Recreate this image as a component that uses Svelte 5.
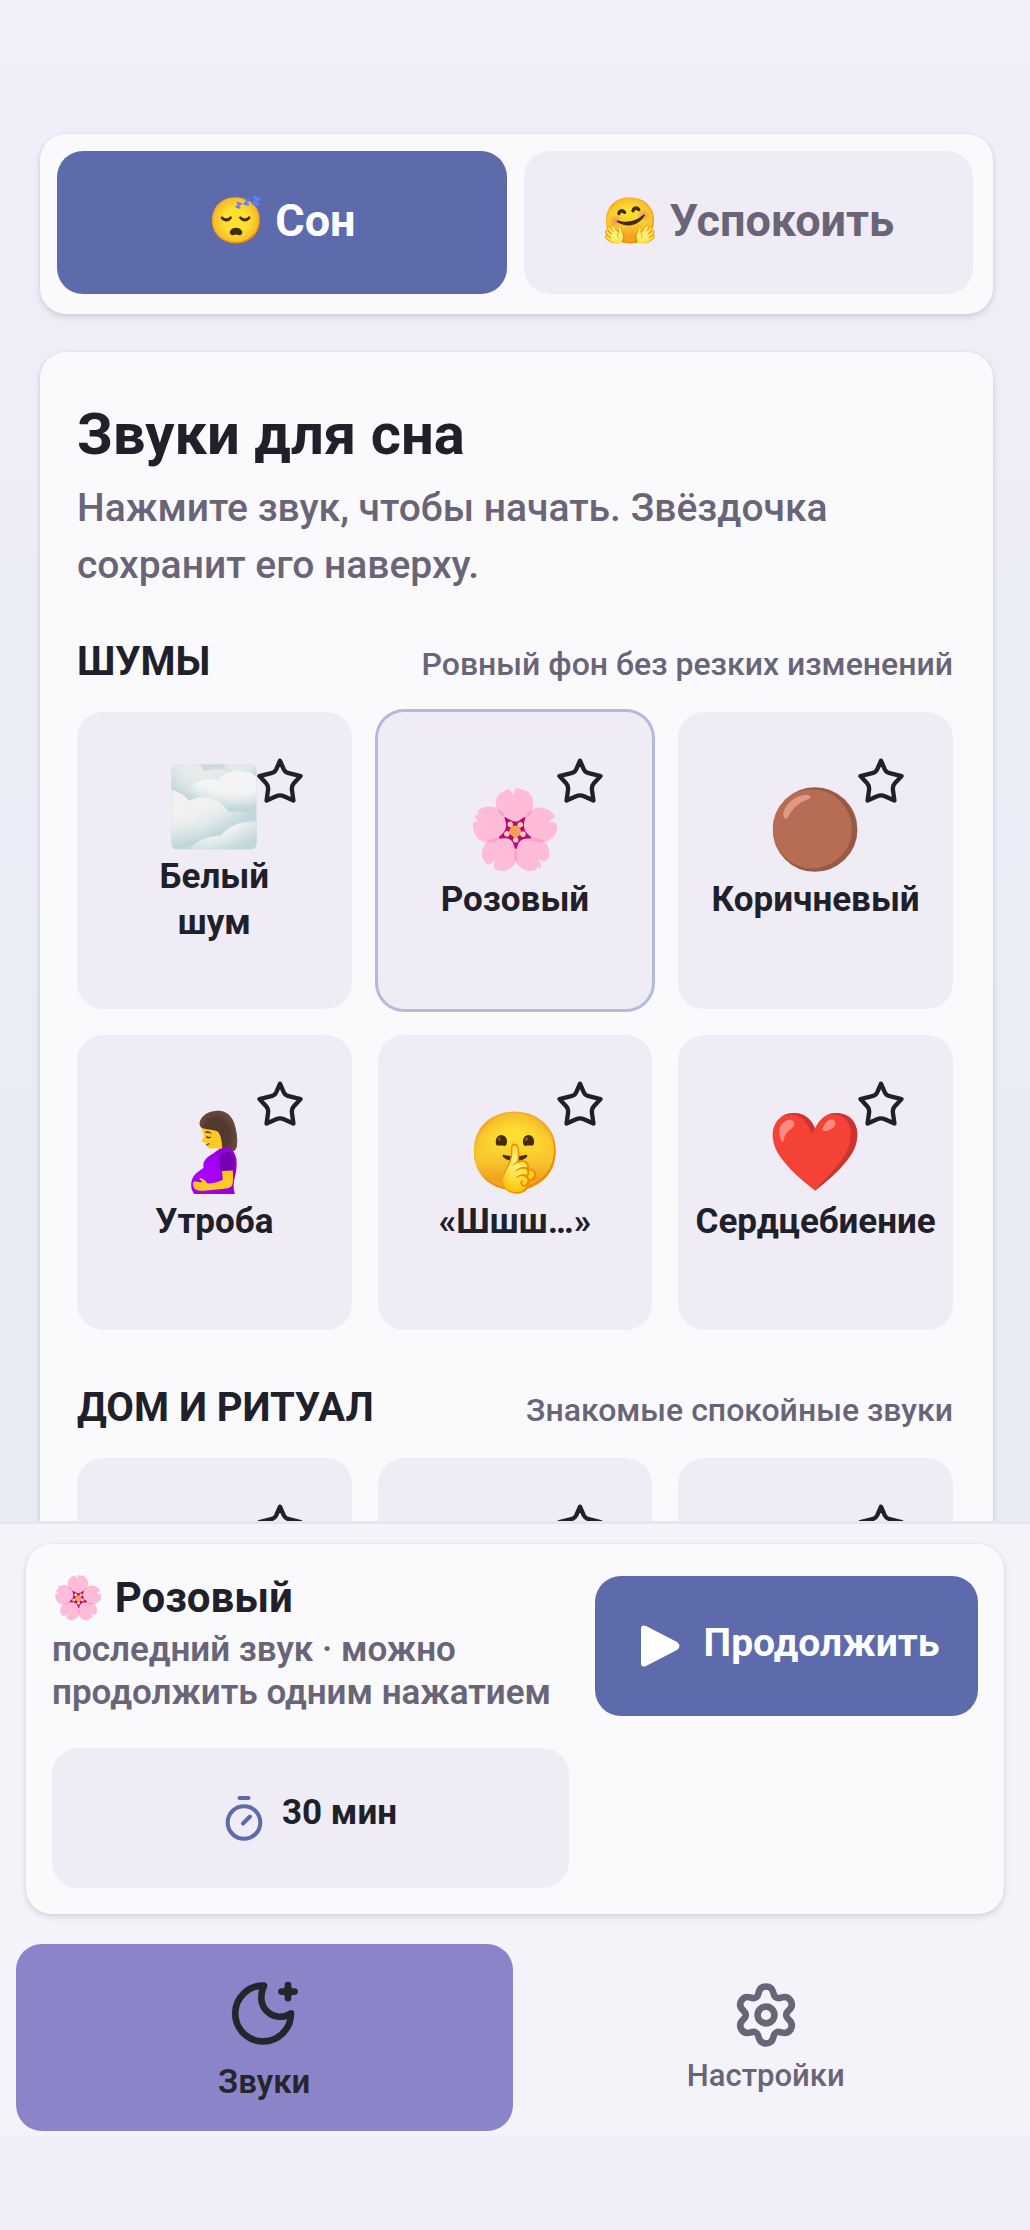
<script>
  const modes = [
    { id: 'sleep', emoji: '😴', label: 'Сон' },
    { id: 'calm', emoji: '🤗', label: 'Успокоить' },
  ];

  const sections = [
    {
      title: 'Шумы',
      hint: 'Ровный фон без резких изменений',
      sounds: [
        { id: 'white', emoji: '🌫️', name: 'Белый шум' },
        { id: 'pink', emoji: '🌸', name: 'Розовый' },
        { id: 'brown', emoji: '🟤', name: 'Коричневый' },
        { id: 'womb', emoji: '🤰', name: 'Утроба' },
        { id: 'shh', emoji: '🤫', name: '«Шшш…»' },
        { id: 'heart', emoji: '❤️', name: 'Сердцебиение' },
      ],
    },
    {
      title: 'Дом и ритуал',
      hint: 'Знакомые спокойные звуки',
      sounds: [
        { id: 'home-1', emoji: '', name: '' },
        { id: 'home-2', emoji: '', name: '' },
        { id: 'home-3', emoji: '', name: '' },
      ],
    },
  ];

  let mode = $state('sleep');
  let current = $state('pink');
  let tab = $state('sounds');
</script>

<div class="app">
  <main class="content">
    <div class="card modes">
      {#each modes as m}
        <button class="mode" class:active={mode === m.id} onclick={() => mode = m.id}>
          {m.emoji} {m.label}
        </button>
      {/each}
    </div>

    <div class="card library">
      <h1>Звуки для сна</h1>
      <p class="lead">Нажмите звук, чтобы начать. Звёздочка сохранит его наверху.</p>

      {#each sections as section}
        <section>
          <div class="section-head">
            <h2>{section.title}</h2>
            <span class="hint">{section.hint}</span>
          </div>
          <div class="grid">
            {#each section.sounds as sound}
              <div class="tile" class:selected={current === sound.id}>
                <button class="sound" aria-label={sound.name || 'Звук'} onclick={() => current = sound.id}>
                  <span class="emoji">{sound.emoji}</span>
                  <span class="name">{sound.name}</span>
                </button>
                <button class="star" aria-label="В избранное">
                  <svg viewBox="0 0 24 24" aria-hidden="true">
                    <path d="M12 2.600L13.700 6.500Q14.400 8 16 8.400L21.500 9.700L18.400 13Q17.300 14.300 17.500 16L18.200 21L13.800 19Q12 18.200 10.200 19L5.800 21L6.500 16Q6.700 14.300 5.600 13L2.500 9.700L8 8.400Q9.600 8 10.300 6.500z" />
                  </svg>
                </button>
              </div>
            {/each}
          </div>
        </section>
      {/each}
    </div>
  </main>

  <footer class="dock">
    <div class="card player">
      <div class="now">
        <strong>🌸 Розовый</strong>
        <span>последний звук · можно продолжить одним нажатием</span>
      </div>
      <button class="play">
        <svg viewBox="0 0 40 44" aria-hidden="true">
          <path d="M1 5v34q0 5 5 3l31-16q5-4 0-8L6 2q-5-2-5 3z" />
        </svg>
        <span>Продолжить</span>
      </button>
      <button class="timer">
        <svg viewBox="0 0 40 48" aria-hidden="true">
          <circle cx="20" cy="28.5" r="16.300" />
          <path d="M15.500 4h9M19 29.500l7-7" />
        </svg>
        <span>30 мин</span>
      </button>
    </div>

    <nav>
      <button class="tab" class:active={tab === 'sounds'} onclick={() => tab = 'sounds'}>
        <svg viewBox="0 0 24 24" aria-hidden="true">
          <path d="M12 2.200A9.300 9.300 0 1 0 21 11.400C16 15 8.500 10 12 2.200z" />
          <path d="M20 2v4.400M17.800 4.200h4.400" />
          <path class="solid" d="M20 1.700l2.500 2.500-2.500 2.500-2.500-2.500z" />
        </svg>
        Звуки
      </button>
      <button class="tab" class:active={tab === 'settings'} onclick={() => tab = 'settings'}>
        <svg viewBox="-12 -12 24 24" aria-hidden="true">
          <path d="M0-9.490Q2.020-9.490 2.490-7.300Q2.950-5.110 5.080-5.800Q7.210-6.490 8.220-4.750Q9.230-3 7.570-1.500Q5.900 0 7.570 1.500Q9.230 3 8.220 4.750Q7.210 6.490 5.080 5.800Q2.950 5.110 2.490 7.300Q2.020 9.490 0 9.490Q-2.020 9.490-2.490 7.300Q-2.950 5.110-5.080 5.800Q-7.210 6.490-8.220 4.750Q-9.230 3-7.570 1.500Q-5.900 0-7.570-1.500Q-9.230-3-8.220-4.750Q-7.210-6.490-5.080-5.800Q-2.950-5.110-2.490-7.300Q-2.020-9.490 0-9.490z" />
          <circle r="2.800" />
        </svg>
        Настройки
      </button>
    </nav>
  </footer>
</div>

<style>
  :global(body) {
    background: #f0eef9;
  }

  .app {
    --ink: #20202b;
    --muted: #696477;
    --accent: #5d6bad;
    --soft: #efecf6;
    --surface: #fafafd;
    display: flex;
    flex-direction: column;
    height: 100vh;
    padding-bottom: 94px;
    box-sizing: border-box;
    color: var(--ink);
    font-family: Roboto, 'Noto Color Emoji', sans-serif;
    background: linear-gradient(#f1eff9, #e7ecf5 50%, #e7ecf5 70%, #f0eef9 96%);
  }

  button {
    font: inherit;
    color: inherit;
    border: 0;
    padding: 0;
    background: none;
    cursor: pointer;
  }

  h1,
  h2,
  p {
    margin: 0;
  }

  svg {
    display: block;
    flex-shrink: 0;
    fill: none;
    stroke: currentColor;
    stroke-linecap: round;
    stroke-linejoin: round;
  }

  .card {
    background: var(--surface);
    border-radius: 26px;
    box-shadow: 0 3px 6px rgba(32, 32, 43, 0.14), 0 0 3px rgba(32, 32, 43, 0.06);
  }

  .content {
    flex: 1;
    min-height: 0;
    overflow: hidden;
    padding: 134px 37px 0 40px;
  }

  /* Mode switch */
  .modes {
    display: grid;
    grid-template-columns: 1fr 1fr;
    gap: 17px;
    padding: 17px 20px 20px 17px;
    margin-bottom: 38px;
  }

  .mode {
    height: 143px;
    padding-bottom: 4px;
    border-radius: 26px;
    font-size: 45px;
    font-weight: 700;
    color: var(--muted);
    background: var(--soft);
  }

  .mode.active {
    color: #fff;
    background: var(--accent);
  }

  /* Sound library */
  .library {
    padding: 47px 40px 38px 37px;
  }

  h1 {
    font-size: 58px;
    line-height: 70px;
    font-weight: 700;
  }

  .lead {
    margin-top: 11px;
    font-size: 39px;
    line-height: 57px;
    font-weight: 500;
    color: var(--muted);
  }

  .section-head {
    display: flex;
    align-items: baseline;
    justify-content: space-between;
    padding: 44px 0 24px;
  }

  section + section {
    margin-top: 10px;
  }

  h2 {
    font-size: 40px;
    line-height: 48px;
    font-weight: 700;
    text-transform: uppercase;
  }

  .hint {
    font-size: 32px;
    line-height: 48px;
    font-weight: 500;
    color: var(--muted);
  }

  .grid {
    display: grid;
    grid-template-columns: repeat(3, 1fr);
    gap: 26px;
  }

  .tile {
    position: relative;
    display: flex;
    min-height: 295px;
    border-radius: 26px;
    background: var(--soft);
  }

  .tile.selected {
    box-shadow: 0 0 0 3px #b2bbdd;
  }

  .sound {
    flex: 1;
    min-width: 0;
    display: flex;
    flex-direction: column;
    align-items: center;
    justify-content: center;
    gap: 5px;
    padding: 53px 0 63px;
  }

  .emoji {
    font-size: 77px;
    line-height: 84px;
  }

  .name {
    width: min-content;
    font-size: 35px;
    line-height: 46px;
    font-weight: 700;
  }

  .star {
    position: absolute;
    top: 43px;
    right: 46px;
  }

  .star svg {
    width: 52px;
    height: 52px;
    stroke-width: 2;
  }

  /* Bottom dock */
  .dock {
    border-top: 3px solid #e7e5ef;
    padding: 20px 16px 5px;
    background: #f5f3fa;
  }

  .player {
    display: grid;
    grid-template-columns: 517fr 383fr;
    gap: 26px;
    align-items: center;
    margin: 0 10px 30px;
    padding: 26px;
  }

  .now {
    display: flex;
    flex-direction: column;
    padding-bottom: 8px;
    font-size: 35px;
    line-height: 43px;
    font-weight: 600;
    color: var(--muted);
  }

  .now strong {
    margin-bottom: 2px;
    font-size: 42px;
    line-height: 56px;
    font-weight: 700;
    color: var(--ink);
  }

  .play,
  .timer {
    display: flex;
    align-items: center;
    justify-content: center;
    height: 140px;
    border-radius: 26px;
    font-weight: 700;
  }

  .play {
    gap: 24px;
    padding-left: 6px;
    font-size: 39px;
    color: #fff;
    background: var(--accent);
  }

  .play span {
    padding-bottom: 6px;
  }

  .play svg {
    width: 40px;
    height: 44px;
    fill: currentColor;
    stroke: none;
  }

  .timer {
    gap: 18px;
    font-size: 35px;
    background: var(--soft);
  }

  .timer span {
    padding-bottom: 12px;
  }

  .timer svg {
    width: 40px;
    height: 48px;
    color: var(--accent);
    stroke-width: 4;
  }

  nav {
    display: grid;
    grid-template-columns: 1fr 1fr;
    gap: 5px;
  }

  .tab {
    display: flex;
    flex-direction: column;
    align-items: center;
    justify-content: center;
    gap: 4px;
    height: 187px;
    border-radius: 26px;
    font-size: 31px;
    line-height: 42px;
    font-weight: 500;
    color: var(--muted);
  }

  .tab svg {
    width: 72px;
    height: 72px;
    stroke-width: 2.2;
  }

  .tab .solid {
    fill: currentColor;
    stroke: none;
  }

  .tab.active {
    gap: 10px;
    padding-top: 7px;
    font-size: 33px;
    font-weight: 600;
    color: #25252e;
    background: #8b84c8;
  }
</style>
